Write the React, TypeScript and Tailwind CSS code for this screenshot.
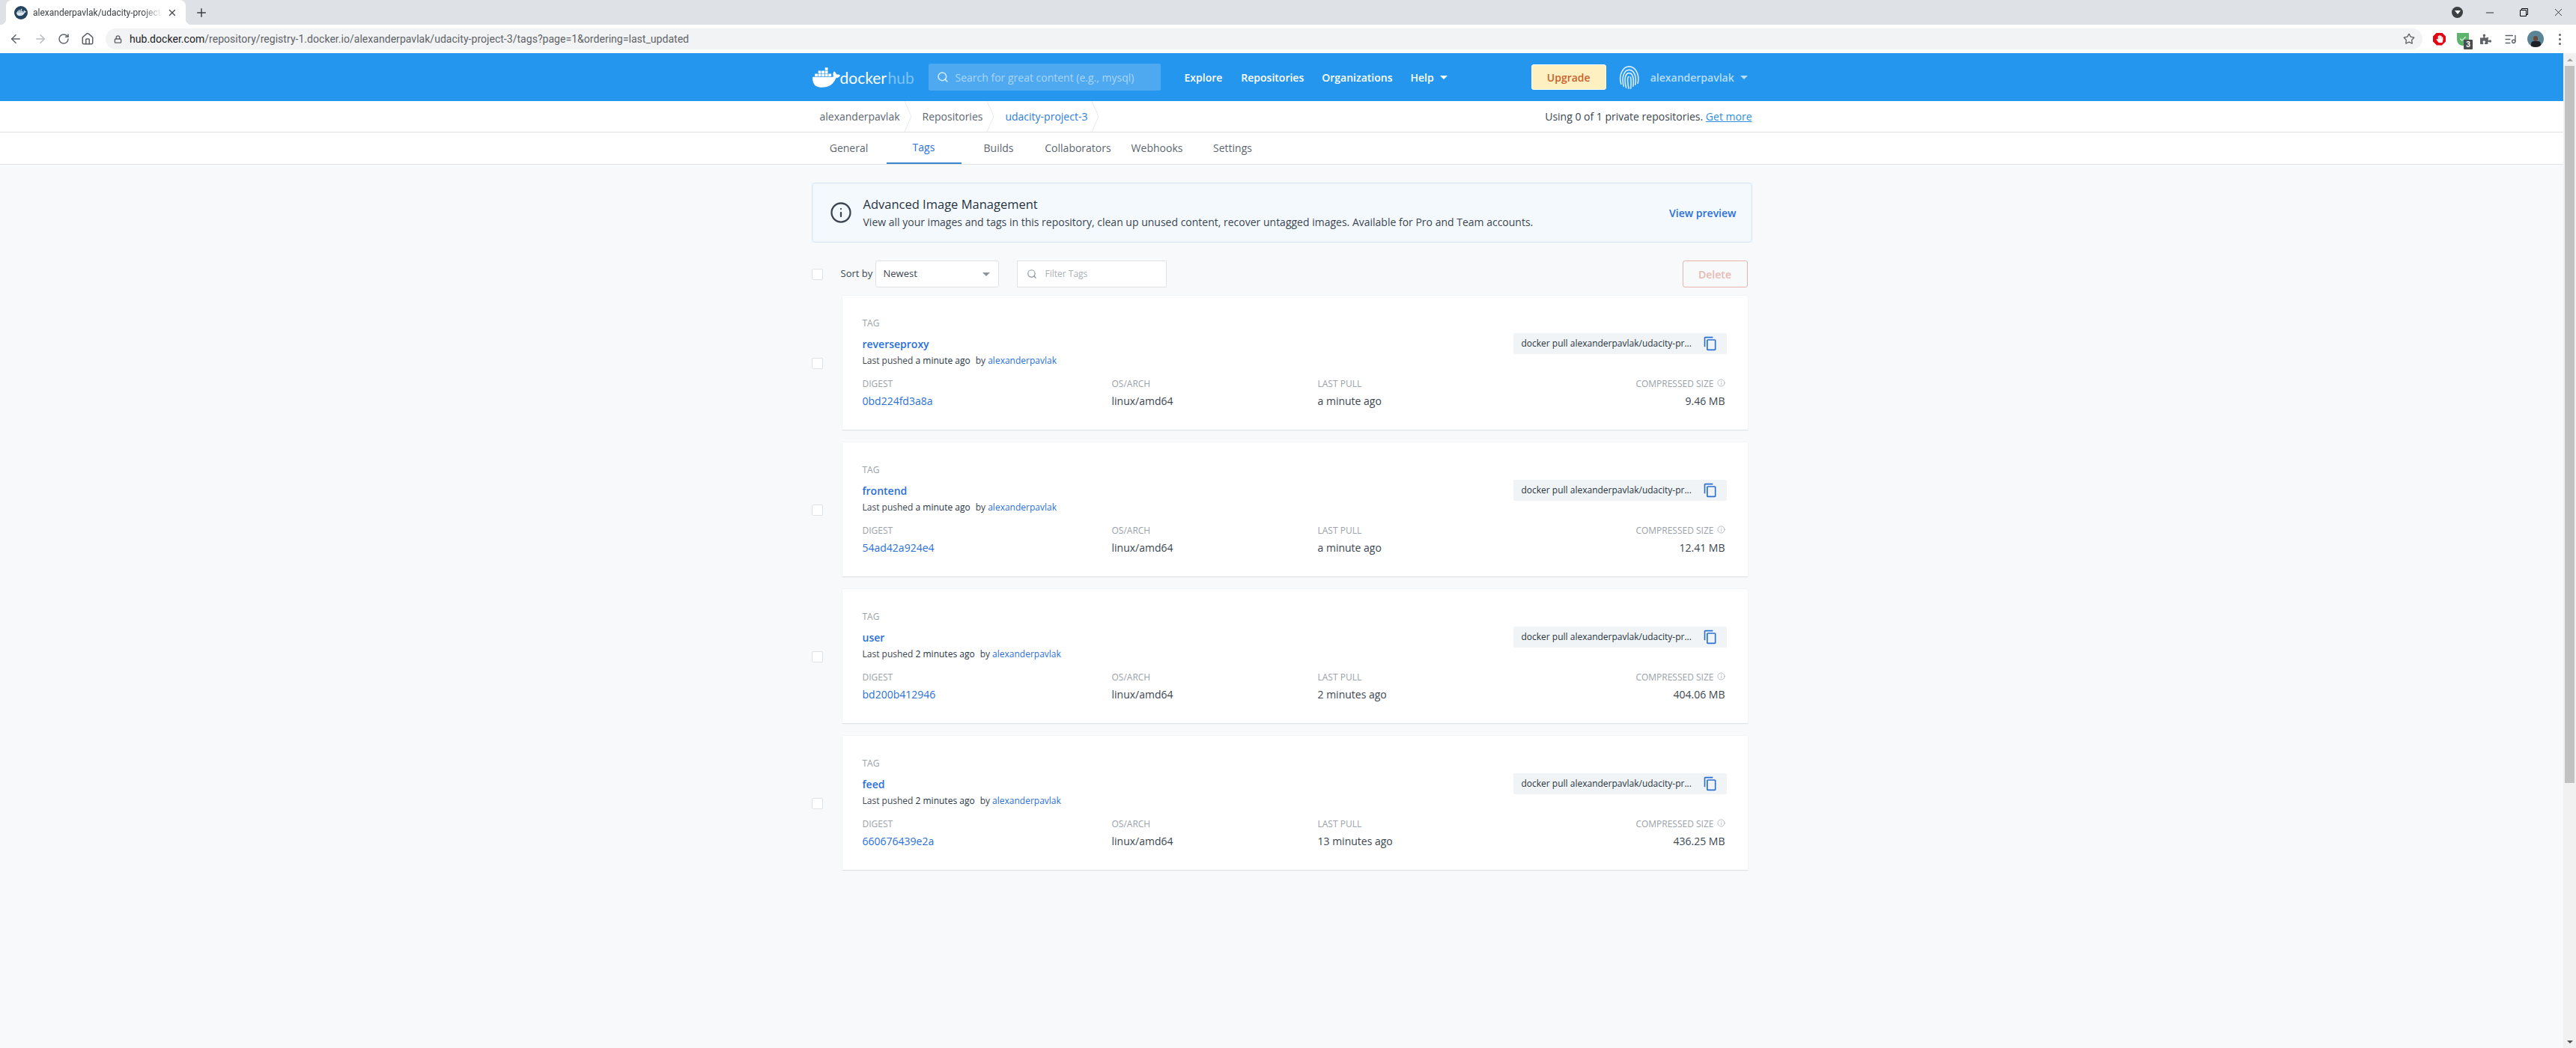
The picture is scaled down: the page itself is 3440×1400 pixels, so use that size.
import { ArrowLeft, ArrowRight, Check, House, Info, ListMusic, Lock, Minus, Plus, RotateCw, Search, Star, X } from "lucide-react";
import { FaPuzzlePiece, FaHandPaper } from "react-icons/fa";
import { MdContentCopy } from "react-icons/md";
import { SiDocker } from "react-icons/si";

const tags = [
  { name: "reverseproxy", pushed: "a minute ago", digest: "0bd224fd3a8a", pull: "a minute ago", size: "9.46 MB" },
  { name: "frontend", pushed: "a minute ago", digest: "54ad42a924e4", pull: "a minute ago", size: "12.41 MB" },
  { name: "user", pushed: "2 minutes ago", digest: "bd200b412946", pull: "2 minutes ago", size: "404.06 MB" },
  { name: "feed", pushed: "2 minutes ago", digest: "660676439e2a", pull: "13 minutes ago", size: "436.25 MB" },
];

const pageTabs = [
  { label: "General", cls: "w-[100px]" },
  { label: "Tags", cls: "w-[100px] text-[#2a70d6] border-b-2 border-[#3b86cf]" },
  { label: "Builds", cls: "w-[100px]" },
  { label: "Collaborators", cls: "w-[112px]" },
  { label: "Webhooks", cls: "w-[99px]" },
  { label: "Settings", cls: "w-[103px]" },
];

function Caret({ cls }: { cls: string }) {
  return <span className={`inline-block w-0 h-0 border-x-[5px] border-x-transparent border-t-[5px] ${cls}`} />;
}

function Checkbox() {
  return <div className="w-[15px] h-[15px] shrink-0 bg-white border border-[#dfe3e6] rounded-[2px]" />;
}

function Crumb({ children, cls }: { children: string; cls: string }) {
  return (
    <div className="flex items-center h-full">
      <span className={cls}>{children}</span>
      <svg width="10" height="41" viewBox="0 0 10 41" className="ml-[6px] mr-[14px]">
        <path d="M0 0 L9 20.5 L0 41" fill="none" stroke="#e6e9eb" strokeWidth="1" />
      </svg>
    </div>
  );
}

function BrowserChrome() {
  return (
    <div className="font-['Roboto',sans-serif]">
      <div className="h-[33px] bg-[#dee1e6] flex items-center relative">
        <div className="relative ml-[8px] w-[240px] h-[33px] bg-white rounded-t-[8px] flex items-center pl-[11px] pr-[11px]">
          <span className="absolute -left-[8px] bottom-0 w-[8px] h-[8px] bg-[radial-gradient(circle_at_0_0,#dee1e6_8px,white_8.5px)]" />
          <span className="absolute -right-[8px] bottom-0 w-[8px] h-[8px] bg-[radial-gradient(circle_at_100%_0,#dee1e6_8px,white_8.5px)]" />
          <div className="w-[18px] h-[18px] rounded-full bg-[#24455f] flex items-center justify-center shrink-0">
            <SiDocker size={13} className="text-[#dbe6ee]" />
          </div>
          <div className="ml-[7px] w-[173px] overflow-hidden whitespace-nowrap text-[12px] text-[#3c4043] [mask-image:linear-gradient(to_right,black_85%,transparent)]">
            alexanderpavlak/udacity-project-3
          </div>
          <X size={14} strokeWidth={2.4} className="ml-[7px] text-[#4b4f53]" />
        </div>
        <Plus size={18} strokeWidth={2} className="ml-[12px] text-[#3c4043]" />
        <div className="ml-auto flex items-center">
          <div className="w-[15px] h-[15px] rounded-full bg-[#3c4043] flex items-center justify-center mr-[28px]">
            <span className="w-0 h-0 border-x-[4px] border-x-transparent border-t-[5px] border-t-white" />
          </div>
          <Minus size={16} strokeWidth={1.2} className="mr-[32px] text-black" />
          <svg width="11" height="11" viewBox="0 0 11 11" className="mr-[32px]">
            <path d="M0.5 2.5 H8.5 V10.5 H0.5 Z M2.5 2.5 V0.5 H10.5 V8.5 H8.5" fill="none" stroke="#000" strokeWidth="1" />
          </svg>
          <X size={17} strokeWidth={1} className="mr-[15px] text-black" />
        </div>
      </div>
      <div className="h-[38px] bg-white flex items-center">
        <ArrowLeft size={18} strokeWidth={2} className="ml-[12px] text-[#5f6368]" />
        <ArrowRight size={18} strokeWidth={2} className="ml-[15px] text-[#b9bcc0]" />
        <RotateCw size={16} strokeWidth={2.2} className="ml-[14px] text-[#5f6368]" />
        <House size={18} strokeWidth={2} className="ml-[15px] text-[#5f6368]" />
        <div className="ml-[15px] w-[3094px] h-[28px] rounded-full bg-[#f1f3f4] flex items-center pl-[11px] pr-[10px]">
          <Lock size={11} strokeWidth={3} className="text-[#5f6368]" />
          <span className="ml-[10px] text-[14px] tracking-[0.035px] text-[#202124]">
            hub.docker.com<span className="text-[#5f6368]">/repository/registry-1.docker.io/alexanderpavlak/udacity-project-3/tags?page=1&amp;ordering=last_updated</span>
          </span>
          <Star size={16} strokeWidth={2} className="ml-auto text-[#5f6368]" />
        </div>
        <div className="relative ml-[14px] w-[17px] h-[17px] bg-[#e30613] [clip-path:polygon(30%_0,70%_0,100%_30%,100%_70%,70%_100%,30%_100%,0_70%,0_30%)] flex items-center justify-center">
          <FaHandPaper size={10} className="text-white" />
        </div>
        <div className="relative ml-[15px] w-[16px] h-[17px] bg-[#5cb56b] rounded-b-full rounded-t-[3px] flex items-center justify-center">
          <Check size={10} strokeWidth={3} className="text-[#d7f2dc]" />
          <span className="absolute left-[9px] top-[9px] w-[12px] h-[13px] bg-[#4a4d50] rounded-[1px] text-white text-[10px] leading-[13px] text-center font-bold">3</span>
        </div>
        <FaPuzzlePiece size={15} className="ml-[15px] text-[#5f6368]" />
        <ListMusic size={17} strokeWidth={2} className="ml-[17px] text-[#5f6368]" />
        <div className="ml-[14px] w-[22px] h-[22px] rounded-full bg-[#5b8496] overflow-hidden flex flex-col items-center justify-end">
          <div className="w-[6px] h-[7px] bg-[#6b4a3a] rounded-full" />
          <div className="w-[13px] h-[8px] bg-[#1f2326] rounded-t-[4px]" />
        </div>
        <div className="ml-[20px] flex flex-col gap-[3px]">
          <span className="w-[3px] h-[3px] rounded-full bg-[#5f6368]" />
          <span className="w-[3px] h-[3px] rounded-full bg-[#5f6368]" />
          <span className="w-[3px] h-[3px] rounded-full bg-[#5f6368]" />
        </div>
      </div>
    </div>
  );
}

function FingerprintMark() {
  return (
    <svg width="33" height="33" viewBox="0 0 34 34" fill="none" stroke="#d5ebfb" strokeWidth="1.7" strokeLinecap="round" className="ml-[14px] shrink-0">
      <path d="M6 26 C2 13 9 2 17 2 C25 2 32 12 29 25" />
      <path d="M9.5 29 C6 15 11 6.5 17 6.5 C23 6.5 28 14 25.5 27" />
      <path d="M13 31 C9.5 19 12 11 17 11 C22 11 24 18 22.5 29" />
      <path d="M16.5 16 C14.5 16 14.5 22 16.5 32" />
      <path d="M19 16.5 C20 21 19.8 27 19.2 32" />
    </svg>
  );
}

function HubNav() {
  return (
    <header className="h-[64px] bg-[#2496ed] flex justify-center">
      <div className="w-[1256px] flex items-center text-[14px] font-semibold text-white whitespace-nowrap">
        <SiDocker size={37} className="text-white shrink-0 ml-[1px]" />
        <span className="w-[62px] text-[21px] font-normal font-['Lato',sans-serif] leading-none">docker</span>
        <span className="ml-[2px] w-[37px] text-[21px] font-normal font-['Lato',sans-serif] leading-none text-[#7cc2f5]">hub</span>
        <div className="ml-[17px] w-[310px] shrink-0 h-[36px] rounded-[2px] bg-[#4fa9f0] flex items-center pl-[11px] text-[#a9d6f8] font-normal">
          <Search size={16} strokeWidth={2.2} className="text-[#d8edfc]" />
          <span className="ml-[9px]">Search for great content (e.g., mysql)</span>
        </div>
        <span className="ml-[32px]">Explore</span>
        <span className="ml-[25px]">Repositories</span>
        <span className="ml-[24px]">Organizations</span>
        <span className="ml-[24px]">Help</span>
        <Caret cls="border-t-white ml-[8px]" />
        <div className="ml-[112px] w-[100px] shrink-0 h-[34px] rounded-[3px] bg-[#fff0c2] border border-white flex items-center justify-center text-[#c8622c]">Upgrade</div>
        <FingerprintMark />
        <span className="ml-[12px] text-[#b7ddf8]">alexanderpavlak</span>
        <Caret cls="border-t-[#b7ddf8] ml-[8px]" />
      </div>
    </header>
  );
}

function TagCard({ tag }: { tag: (typeof tags)[number] }) {
  return (
    <div className="flex items-center gap-[26px]">
      <Checkbox />
      <div className="flex-1 h-[180px] bg-white border-b border-[#dfe3e6] shadow-[0_0_1px_rgba(0,0,0,0.12)] pt-[29px] pl-[27px] pr-[28px]">
        <div className="flex justify-between">
          <div>
            <div className="text-[12px] leading-[16px] text-[#9aa1a7]">TAG</div>
            <div className="mt-[8px] text-[14px] leading-[24px] font-semibold text-[#2a70d6]">{tag.name}</div>
            <div className="mt-[2px] text-[12px] leading-[16px] text-[#3b4650]">
              Last pushed <span className="font-medium text-[#27343f]">{tag.pushed}</span>
              <span className="ml-[7px]">by </span>
              <span className="text-[#2a70d6]">alexanderpavlak</span>
            </div>
          </div>
          <div className="mt-[21px] w-[285px] h-[28px] bg-[#f1f4f6] rounded-[2px] flex items-center pl-[11px] text-[12px] text-[#27343f]">
            <span>docker pull alexanderpavlak/udacity-pr...</span>
            <MdContentCopy size={20} className="ml-auto mr-[12px] text-[#2a70d6]" />
          </div>
        </div>
        <div className="mt-[15px] grid grid-cols-[333px_275px_1fr_auto] text-[14px] text-[#3b4650]">
          <div className="text-[12px] leading-[16px] text-[#9aa1a7]">DIGEST</div>
          <div className="text-[12px] leading-[16px] text-[#9aa1a7]">OS/ARCH</div>
          <div className="text-[12px] leading-[16px] text-[#9aa1a7]">LAST PULL</div>
          <div className="text-[12px] leading-[16px] text-[#9aa1a7] flex items-center gap-[4px] pr-[2px]">
            COMPRESSED SIZE <Info size={11} strokeWidth={1.5} className="-mt-[3px]" />
          </div>
          <div className="mt-[5px] leading-[20px] text-[#2a70d6]">{tag.digest}</div>
          <div className="mt-[5px] leading-[20px]">linux/amd64</div>
          <div className="mt-[5px] leading-[20px]">{tag.pull}</div>
          <div className="mt-[5px] leading-[20px] text-right pr-[2px]">{tag.size}</div>
        </div>
      </div>
    </div>
  );
}

export default function App() {
  return (
    <div className="h-[1400px] w-[3440px] overflow-hidden flex flex-col bg-[#f7f9fa] font-['Open_Sans',sans-serif] text-[#27343f]">
      <BrowserChrome />
      <div className="flex-1 flex min-h-0">
        <div className="flex-1 min-w-0">
          <HubNav />
          <div className="h-[42px] bg-white border-b border-[#dfe3e6] flex justify-center">
            <div className="w-[1256px] flex items-center text-[14px] text-[#5c6670] pl-[11px]">
              <Crumb cls="">alexanderpavlak</Crumb>
              <Crumb cls="">Repositories</Crumb>
              <Crumb cls="text-[#2f7bd8]">udacity-project-3</Crumb>
              <span className="ml-auto text-[#3b4650]">
                Using 0 of 1 private repositories. <span className="text-[#2f8ee0] underline">Get more</span>
              </span>
            </div>
          </div>
          <div className="h-[43px] bg-white border-b border-[#dfe3e6] flex justify-center">
            <div className="w-[1256px] flex text-[14px] text-[#5c6670]">
              {pageTabs.map((t) => (
                <div key={t.label} className={`h-[42px] pb-[2px] flex items-center justify-center ${t.cls}`}>{t.label}</div>
              ))}
            </div>
          </div>
          <main className="w-[1256px] mx-auto pt-[24px]">
            <div className="h-[80px] bg-[#f4f9fe] border border-[#d3e3f4] rounded-[4px] flex items-center pl-[23px] pr-[20px]">
              <Info size={30} strokeWidth={1.8} className="text-[#3b4650]" />
              <div className="ml-[15px]">
                <div className="text-[16.5px] leading-[24px] text-[#27343f]">Advanced Image Management</div>
                <div className="text-[14px] leading-[20px] text-[#3b4650] mt-[2px]">View all your images and tags in this repository, clean up unused content, recover untagged images. Available for Pro and Team accounts.</div>
              </div>
              <span className="ml-auto text-[14px] font-semibold text-[#2a70d6]">View preview</span>
            </div>
            <div className="mt-[24px] h-[36px] flex items-center pr-[6px] text-[14px]">
              <Checkbox />
              <span className="ml-[24px] w-[40px] whitespace-nowrap text-[13px] text-[#3b4650]">Sort by</span>
              <div className="ml-[6px] w-[165px] h-[36px] bg-white border border-[#dfe3e6] rounded-[3px] flex items-center pl-[10px] pr-[11px] text-[13px] text-[#3b4650]">
                Newest
                <Caret cls="ml-auto border-t-[#8b949b]" />
              </div>
              <div className="ml-[24px] w-[200px] h-[36px] bg-white border border-[#dfe3e6] rounded-[1px] flex items-center pl-[12px] text-[12px] text-[#a9b0b6]">
                <Search size={14} strokeWidth={2} className="text-[#8b949b]" />
                <span className="ml-[11px]">Filter Tags</span>
              </div>
              <div className="ml-auto w-[87px] h-[36px] border border-[#e9b3ab] rounded-[3px] flex items-center justify-center font-semibold text-[#e9bab2]">Delete</div>
            </div>
            <div className="mt-[11px] pr-[6px] flex flex-col gap-[16px]">
              {tags.map((t) => (
                <TagCard key={t.name} tag={t} />
              ))}
            </div>
          </main>
        </div>
        <div className="w-[17px] bg-[#f1f1f1] flex flex-col items-center">
          <div className="h-[17px] flex items-center justify-center">
            <span className="w-0 h-0 border-x-[4px] border-x-transparent border-b-[4px] border-b-[#a3a3a3]" />
          </div>
          <div className="w-[13px] h-[958px] bg-[#c1c1c1]" />
          <div className="mt-auto h-[17px] flex items-center justify-center">
            <span className="w-0 h-0 border-x-[4px] border-x-transparent border-t-[4px] border-t-[#505050]" />
          </div>
        </div>
      </div>
    </div>
  );
}
